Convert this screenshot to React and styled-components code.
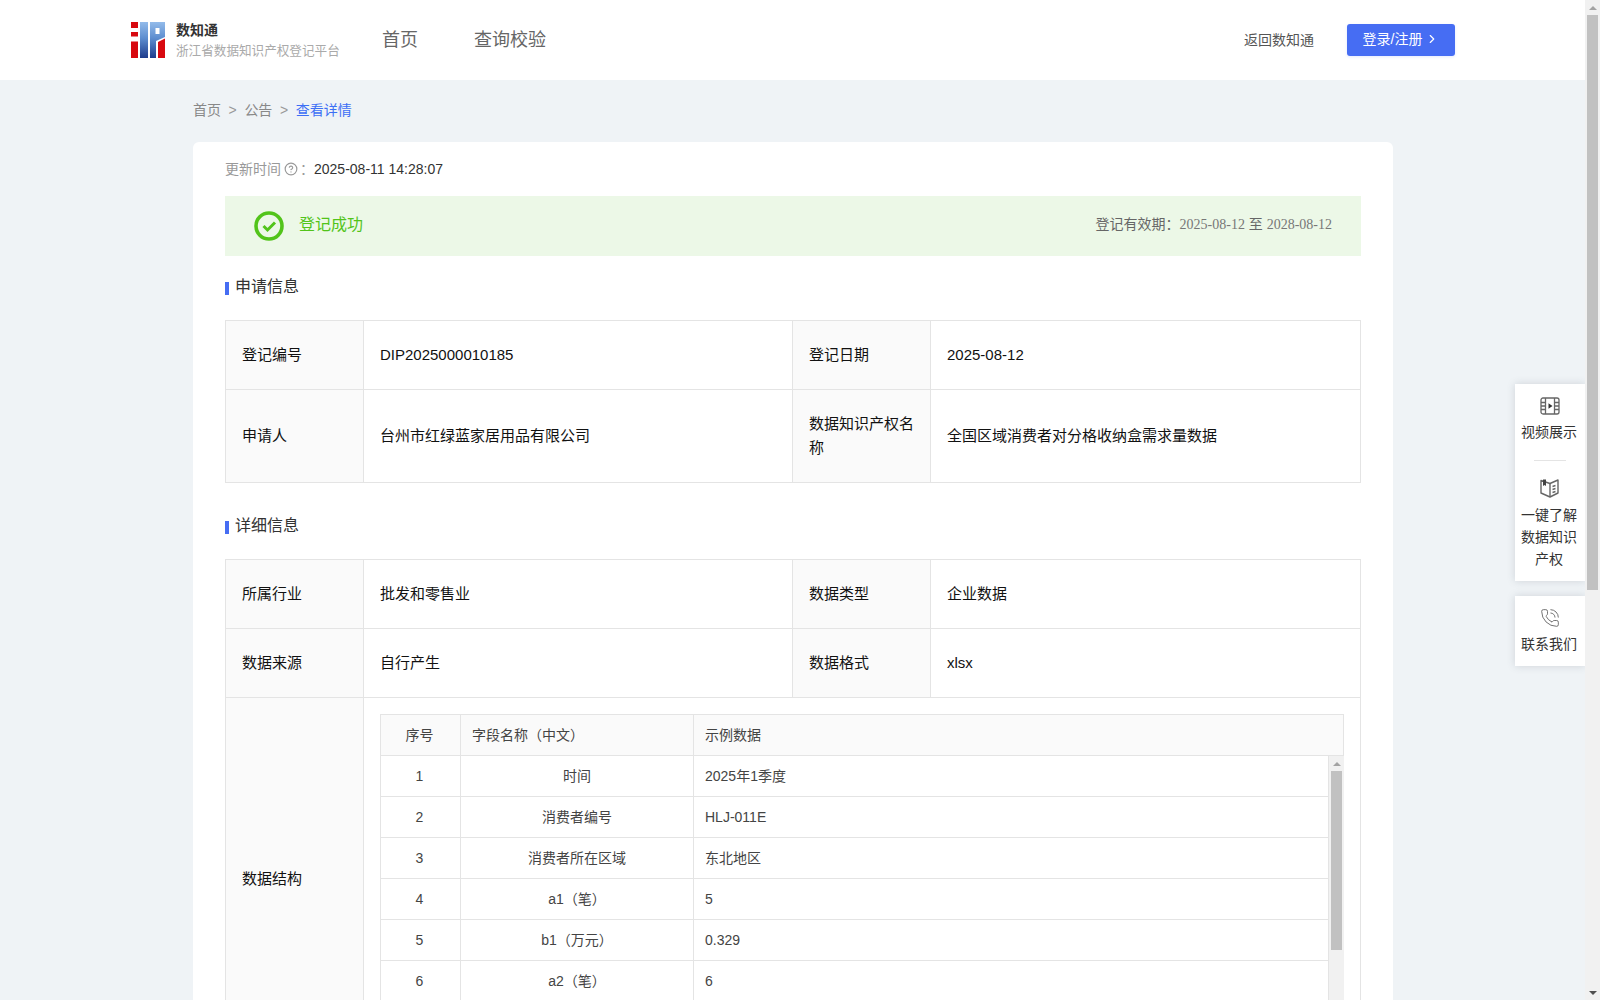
import React from 'react';
import styled, { createGlobalStyle } from 'styled-components';
import { ChevronRight, CircleHelp, PhoneCall } from 'lucide-react';

const Global = createGlobalStyle`
  html, body { margin: 0; padding: 0; background: #eff3f6; }
  body { font-family: "Liberation Sans", "Noto Sans CJK SC", sans-serif; font-size: 14px; color: #333; }
  * { box-sizing: border-box; }
`;

const Shell = styled.div`display: flex; height: 100vh; overflow: hidden;`;
const Page = styled.div`position: relative; flex: 1; min-width: 0; overflow: hidden; background: #eff3f6;`;

/* scrollbars */
const Track = styled.div`
  display: flex; flex-direction: column; align-items: center; flex: none;
  width: ${p => p.$w}px; background: #f1f1f1;
`;
const Arrow = styled.div`
  flex: none; height: 15px; width: 100%; display: flex; align-items: center; justify-content: center;
  &::after {
    content: ''; width: 0; height: 0; border-left: 4px solid transparent; border-right: 4px solid transparent;
    ${p => p.$down ? `border-top: 4px solid ${p.$dark ? '#505050' : '#a3a3a3'};` : `border-bottom: 4px solid #a3a3a3;`}
  }
`;
const Thumb = styled.div`flex: none; width: 11px; height: ${p => p.$h}px; background: #c1c1c1;`;
const Spacer = styled.div`flex: 1;`;

/* header */
const Header = styled.header`height: 80px; background: #fff; display: flex; align-items: center; padding: 0 130px 0 131px;`;
const Brand = styled.div`display: flex; align-items: center; gap: 11px; width: 251px; flex: none;`;
const BrandText = styled.div`display: flex; flex-direction: column;`;
const BrandName = styled.div`font-size: 14px; font-weight: 700; line-height: 19px; color: #333; margin-bottom: 2px;`;
const BrandSub = styled.div`font-size: 12.6px; line-height: 19px; color: #aaa; white-space: nowrap; margin-bottom: -2px;`;
const Nav = styled.nav`display: flex; gap: 56px;`;
const NavItem = styled.a`font-size: 18px; line-height: 24px; color: #666;`;
const HeaderRight = styled.div`margin-left: auto; display: flex; align-items: center; gap: 33px;`;
const BackLink = styled.a`font-size: 14px; line-height: 22px; color: #555; padding-bottom: 1px;`;
const LoginBtn = styled.button`
  width: 108px; height: 32px; border: 0; border-radius: 3px; background: #466df3; color: #fff;
  font: inherit; font-size: 14px; line-height: 22px; display: flex; align-items: center; justify-content: center; gap: 3px;
  box-shadow: 0 1px 3px rgba(70,109,243,.15); padding: 0 0 2px;
`;

/* main */
const Main = styled.main`width: 1200px; margin-left: 193px;`;
const Crumbs = styled.div`display: flex; height: 62px; padding-top: 19px; line-height: 22px; color: #888; gap: 7.6px;`;
const CrumbSep = styled.span`color: #999;`;
const CrumbNow = styled.span`color: #3d6ff5;`;
const Card = styled.div`background: #fff; border-radius: 6px 6px 0 0; padding: 16px 32px 32px;`;
const UpdateRow = styled.div`display: flex; align-items: center; line-height: 22px; color: #999;`;
const UpdateTime = styled.span`color: #333;`;
const HelpIcon = styled(CircleHelp)`margin: 0 2px 0 3px; color: #999;`;
const Banner = styled.div`
  margin-top: 16px; height: 60px; background: #ecf8e7; display: flex; align-items: center; padding: 0 29px; line-height: 22px;
`;
const BannerState = styled.div`display: flex; align-items: center; gap: 15px; font-size: 16px; color: #52c41a;`;
const BannerLabel = styled.span`padding-bottom: 2px;`;
const Validity = styled.div`margin-left: auto; color: #666; padding-bottom: 3px;`;
const DateText = styled.span`font-family: "Liberation Serif", "Noto Sans CJK SC", serif; color: #777;`;
const SectionTitle = styled.h3`
  margin: ${p => p.$top}px 0 ${p => p.$bottom}px; font-size: 16px; font-weight: 400; line-height: 24px; color: #333;
  display: flex; align-items: center; gap: 6px;
  &::before { content: ''; width: 4px; height: 13px; background: #466df3; margin-top: 2px; }
`;
const InfoTable = styled.table`
  width: 1135px; table-layout: fixed; border-collapse: collapse; font-size: 15px; line-height: 24px; color: #111;
`;
const LabelCell = styled.th`
  background: #fafafa; border: 1px solid #e4e4e4; font-weight: 400; text-align: left; padding: 22px 16px;
`;
const ValueCell = styled.td`border: 1px solid #e4e4e4; padding: 22px 16px;`;
const StructCell = styled.td`border: 1px solid #e4e4e4; padding: 16px; vertical-align: top;`;

const HeadGrid = styled.div`
  display: grid; grid-template-columns: 79px 233px 1fr; height: 42px; background: #fafafa;
  border: 1px solid #e4e4e4; font-size: 14px; line-height: 40px; color: #444;
`;
const BodyWrap = styled.div`display: flex; height: 287px; border-left: 1px solid #e4e4e4;`;
const Rows = styled.div`flex: 1; min-width: 0; overflow: hidden;`;
const Row = styled.div`
  display: grid; grid-template-columns: 79px 233px 1fr; height: 41px; border-bottom: 1px solid #e4e4e4;
  border-right: 1px solid #e4e4e4; font-size: 14px; line-height: 40px; color: #444;
`;
const GridCell = styled.div`
  padding: ${p => p.$first ? '0 13px 0 11px' : '0 11px'}; text-align: ${p => p.$center ? 'center' : 'left'};
  ${p => p.$first ? '' : 'border-left: 1px solid #e4e4e4;'}
`;

const Float = styled.aside`position: absolute; right: 0; top: 384px; width: 70px; display: flex; flex-direction: column; gap: 15px;`;
const FloatCard = styled.div`
  background: #fff; box-shadow: 0 0 8px rgba(60,70,90,.18); padding: 11px 0; display: flex; flex-direction: column; align-items: center;
`;
const FloatItem = styled.div`display: flex; flex-direction: column; align-items: center; color: #333; font-size: 14px; line-height: 22px; text-align: center; width: 58px;`;
const FloatLabel = styled.span`display: block; width: 56px; margin-right: 2px;`;
const FloatIcon = styled.div`height: 22px; display: flex; align-items: center; justify-content: center; color: #666; margin-bottom: ${p => p.$mb}px;`;
const FloatRule = styled.div`width: 32px; height: 1px; background: #e4e4e4; margin: 17px 0 16px;`;

const Logo = () => (
  <svg width="34" height="36" viewBox="0 0 34 36">
    <defs>
      <linearGradient id="lg" x1="0" y1="0" x2="0" y2="1">
        <stop offset="0" stopColor="#93bbea" /><stop offset=".45" stopColor="#5d8dcf" /><stop offset="1" stopColor="#1e3c8c" />
      </linearGradient>
    </defs>
    <path d="M0 0h7v6H0zM0 10h7v4.5H0zM0 19.5h7V36H0z" fill="#d8090f" />
    <rect x="9" y="0" width="8" height="36" fill="url(#lg)" />
    <path d="M19 0h15v15l-9 4v17h-6zM24.5 6v6h4V6z" fill="url(#lg)" fillRule="evenodd" />
    <path d="M27 20l7-3.5V36h-7z" fill="#d8090f" />
  </svg>
);

const FilmIcon = () => (
  <svg width="20" height="20" viewBox="0 0 20 20" fill="none" stroke="#666" strokeWidth="1.3">
    <rect x="1" y="2" width="18" height="16" rx="2" />
    <path d="M5.5 2v16M14.5 2v16M1 6.5h4.5M1 10h4.5M1 13.5h4.5M14.5 6.5H19M14.5 10H19M14.5 13.5H19" />
    <path d="M8.5 7.2l4 2.8-4 2.8z" fill="#333" stroke="none" />
  </svg>
);
const BookIcon = () => (
  <svg width="20" height="20" viewBox="0 0 20 20" fill="none" stroke="#666" strokeWidth="1.4" strokeLinejoin="round">
    <path d="M1 2.5l9 3 8-3.5v13l-8 4-9-4z" />
    <path d="M10 5.5V18.8M12.5 8.5l3-1M12.5 11.5l3-1M12.5 14.5l3-1" />
    <path d="M3 1.5h3v6.5l-1.5-1-1.5 1z" fill="#444" stroke="none" />
  </svg>
);
const SuccessIcon = () => (
  <svg width="30" height="30" viewBox="0 0 30 30" fill="none" stroke="#52c41a">
    <circle cx="15" cy="15" r="13" strokeWidth="3.6" />
    <path d="M9.5 15l4 4 7.5-7.5" strokeWidth="3" />
  </svg>
);

const rows = [
  ['1', '时间', '2025年1季度'],
  ['2', '消费者编号', 'HLJ-011E'],
  ['3', '消费者所在区域', '东北地区'],
  ['4', 'a1（笔）', '5'],
  ['5', 'b1（万元）', '0.329'],
  ['6', 'a2（笔）', '6'],
];

const Cols = () => (
  <colgroup><col width="138" /><col width="429" /><col width="138" /><col width="430" /></colgroup>
);

export default function App() {
  return (
    <Shell>
      <Global />
      <Page>
        <Header>
          <Brand>
            <Logo />
            <BrandText>
              <BrandName>数知通</BrandName>
              <BrandSub>浙江省数据知识产权登记平台</BrandSub>
            </BrandText>
          </Brand>
          <Nav>
            <NavItem>首页</NavItem>
            <NavItem>查询校验</NavItem>
          </Nav>
          <HeaderRight>
            <BackLink>返回数知通</BackLink>
            <LoginBtn>登录/注册 <ChevronRight size={14} /></LoginBtn>
          </HeaderRight>
        </Header>
        <Main>
          <Crumbs>
            <span>首页</span><CrumbSep>&gt;</CrumbSep><span>公告</span><CrumbSep>&gt;</CrumbSep><CrumbNow>查看详情</CrumbNow>
          </Crumbs>
          <Card>
            <UpdateRow>
              更新时间<HelpIcon size={14} />：<UpdateTime>2025-08-11 14:28:07</UpdateTime>
            </UpdateRow>
            <Banner>
              <BannerState><SuccessIcon /><BannerLabel>登记成功</BannerLabel></BannerState>
              <Validity>登记有效期：<DateText>2025-08-12</DateText> 至 <DateText>2028-08-12</DateText></Validity>
            </Banner>
            <SectionTitle $top={19} $bottom={21}>申请信息</SectionTitle>
            <InfoTable>
              <Cols />
              <tbody>
                <tr><LabelCell>登记编号</LabelCell><ValueCell>DIP2025000010185</ValueCell><LabelCell>登记日期</LabelCell><ValueCell>2025-08-12</ValueCell></tr>
                <tr><LabelCell>申请人</LabelCell><ValueCell>台州市红绿蓝家居用品有限公司</ValueCell><LabelCell>数据知识产权名称</LabelCell><ValueCell>全国区域消费者对分格收纳盒需求量数据</ValueCell></tr>
              </tbody>
            </InfoTable>
            <SectionTitle $top={31} $bottom={21}>详细信息</SectionTitle>
            <InfoTable>
              <Cols />
              <tbody>
                <tr><LabelCell>所属行业</LabelCell><ValueCell>批发和零售业</ValueCell><LabelCell>数据类型</LabelCell><ValueCell>企业数据</ValueCell></tr>
                <tr><LabelCell>数据来源</LabelCell><ValueCell>自行产生</ValueCell><LabelCell>数据格式</LabelCell><ValueCell>xlsx</ValueCell></tr>
                <tr>
                  <LabelCell>数据结构</LabelCell>
                  <StructCell colSpan={3}>
                    <HeadGrid>
                      <GridCell $first $center>序号</GridCell>
                      <GridCell>字段名称（中文）</GridCell>
                      <GridCell>示例数据</GridCell>
                    </HeadGrid>
                    <BodyWrap>
                      <Rows>
                        {rows.map(r => (
                          <Row key={r[0]}>
                            <GridCell $first $center>{r[0]}</GridCell>
                            <GridCell $center>{r[1]}</GridCell>
                            <GridCell>{r[2]}</GridCell>
                          </Row>
                        ))}
                      </Rows>
                      <Track $w={15}>
                        <Arrow />
                        <Thumb $h={179} />
                        <Spacer />
                      </Track>
                    </BodyWrap>
                  </StructCell>
                </tr>
              </tbody>
            </InfoTable>
          </Card>
        </Main>
        <Float>
          <FloatCard>
            <FloatItem>
              <FloatIcon $mb={4}><FilmIcon /></FloatIcon>
              <FloatLabel>视频展示</FloatLabel>
            </FloatItem>
            <FloatRule />
            <FloatItem>
              <FloatIcon $mb={5}><BookIcon /></FloatIcon>
              <FloatLabel>一键了解数据知识产权</FloatLabel>
            </FloatItem>
          </FloatCard>
          <FloatCard>
            <FloatItem>
              <FloatIcon $mb={4}><PhoneCall size={20} strokeWidth={1.1} /></FloatIcon>
              <FloatLabel>联系我们</FloatLabel>
            </FloatItem>
          </FloatCard>
        </Float>
      </Page>
      <Track $w={15}>
        <Arrow />
        <Thumb $h={575} />
        <Spacer />
        <Arrow $down $dark />
      </Track>
    </Shell>
  );
}
